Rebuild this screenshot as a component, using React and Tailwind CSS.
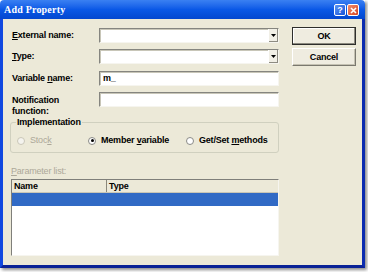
export default function App() {
  const input =
    'h-[15px] w-[180px] bg-white border border-t-[#85857f] border-l-[#85857f] border-b-[#f6f5ef] border-r-[#f6f5ef] shadow-[inset_1px_1px_0_#c8c6b8]'

  return (
    <div className="w-[368px] h-[272px] bg-white font-['Liberation_Sans',Arial,sans-serif] text-[9px] leading-[11px] tracking-[-0.2px] text-black">
      <div className="w-[365px] h-[268px] flex flex-col shadow-[2px_2px_3px_rgba(0,0,0,0.45)]">
        {/* title bar */}
        <div className="h-[19px] shrink-0 flex items-center justify-between pl-[4px] pr-[6px] rounded-t-[4px] bg-gradient-to-b from-[#3a80f2] via-[#0a58e6] to-[#0347cf]">
          <span className="font-['Liberation_Serif',serif] font-bold text-[10px] tracking-[0.2px] text-white">
            Add Property
          </span>
          <div className="flex items-center gap-[1px] mt-[1px]">
            <div className="w-[12px] h-[12px] rounded-[2px] border border-white bg-gradient-to-br from-[#5c94f4] to-[#1450d8] flex items-center justify-center text-white font-bold text-[9px] leading-none">
              ?
            </div>
            <div className="w-[12px] h-[12px] rounded-[2px] border border-white bg-gradient-to-br from-[#f08a6a] to-[#d8431c] flex items-center justify-center">
              <svg width="7" height="7" viewBox="0 0 7 7">
                <path d="M1 1L6 6M6 1L1 6" stroke="white" strokeWidth="1.6" />
              </svg>
            </div>
          </div>
        </div>

        {/* body */}
        <div className="flex-1 flex bg-[#ece9d8] border-l-[3px] border-r-[3px] border-b-[3px] border-l-[#1148e0] border-r-[#0b2bb0] border-b-[#0a2296] pt-[9px] pl-[7px] pr-[5px]">
          <div className="w-[269px] flex flex-col">
            <div className="flex items-center">
              <span className="w-[89px] pl-[2px] font-bold">
                <span className="underline">E</span>xternal name:
              </span>
              <Combo cls={input} />
            </div>
            <div className="flex items-center mt-[6px]">
              <span className="w-[89px] pl-[2px] font-bold">
                <span className="underline">T</span>ype:
              </span>
              <Combo cls={input} />
            </div>
            <div className="flex items-center mt-[7px]">
              <span className="w-[89px] pl-[2px] font-bold">
                Variable <span className="underline">n</span>ame:
              </span>
              <div className={input + ' flex items-center pl-[3px] font-bold'}>m_</div>
            </div>
            <div className="flex items-start mt-[6px]">
              <span className="w-[89px] pl-[2px] pt-[3px] font-bold">
                Notification
                <br />
                function:
              </span>
              <div className={input} />
            </div>

            <fieldset className="border border-[#d0d0bf] rounded-[3px] pl-[6px] pt-[7px] pb-[6px]">
              <legend className="-ml-[1px] px-[1px] font-bold">Implementation</legend>
              <div className="h-[11px] flex items-center">
                <div className="w-[71px] flex items-center gap-[5px] text-[#aca899]">
                  <span className="w-[8px] h-[8px] rounded-full border border-[#cac7b8] bg-[#f4f3ee]" />
                  <span>
                    Stoc<span className="underline">k</span>
                  </span>
                </div>
                <div className="w-[98px] flex items-center gap-[5px] font-bold">
                  <span className="w-[8px] h-[8px] rounded-full border border-[#8a8a86] bg-white flex items-center justify-center">
                    <span className="w-[3px] h-[3px] rounded-full bg-black" />
                  </span>
                  <span>
                    Member <span className="underline">v</span>ariable
                  </span>
                </div>
                <div className="flex items-center gap-[5px] font-bold">
                  <span className="w-[8px] h-[8px] rounded-full border border-[#8a8a86] bg-white" />
                  <span>
                    Get/Set <span className="underline">m</span>ethods
                  </span>
                </div>
              </div>
            </fieldset>

            <div className="mt-[13px] pl-[1px] text-[#aca899]">
              <span className="underline">P</span>arameter list:
            </div>
            <div className="mt-[2px] ml-[1px] w-[268px] h-[77px] flex flex-col bg-white border border-t-[#7f7f7a] border-l-[#7f7f7a] border-b-[#f6f5ef] border-r-[#f6f5ef]">
              <div className="h-[13px] flex bg-[#ece9d8] border-b border-[#c9c6b6] font-bold">
                <div className="w-[95px] pl-[2px] border-r border-[#8a877a] flex items-center">Name</div>
                <div className="flex-1 pl-[2px] flex items-center">Type</div>
              </div>
              <div className="h-[13px] bg-[#316ac5]" />
            </div>
          </div>

          <div className="ml-[13px] w-[64px] flex flex-col -mt-[1px]">
            <div className="h-[18px] flex items-center justify-center font-bold bg-[#efece0] border border-[#2e2e2c] shadow-[inset_-1px_-1px_0_#8c8a80,inset_1px_1px_0_#ffffff]">
              OK
            </div>
            <div className="mt-[3px] h-[18px] flex items-center justify-center font-bold bg-[#efece0] border border-t-[#ffffff] border-l-[#ffffff] border-b-[#7a786e] border-r-[#7a786e] shadow-[inset_-1px_-1px_0_#c4c1b2]">
              Cancel
            </div>
          </div>
        </div>
      </div>
    </div>
  )
}

function Combo({ cls }) {
  return (
    <div className={cls + ' flex justify-end'}>
      <div className="w-[10px] h-full bg-[#f1efe6] border-l border-[#ffffff] shadow-[inset_-1px_-1px_0_#8e8c82] flex items-center justify-center">
        <svg width="5" height="3" viewBox="0 0 5 3">
          <path d="M0 0H5L2.5 3Z" fill="black" />
        </svg>
      </div>
    </div>
  )
}
